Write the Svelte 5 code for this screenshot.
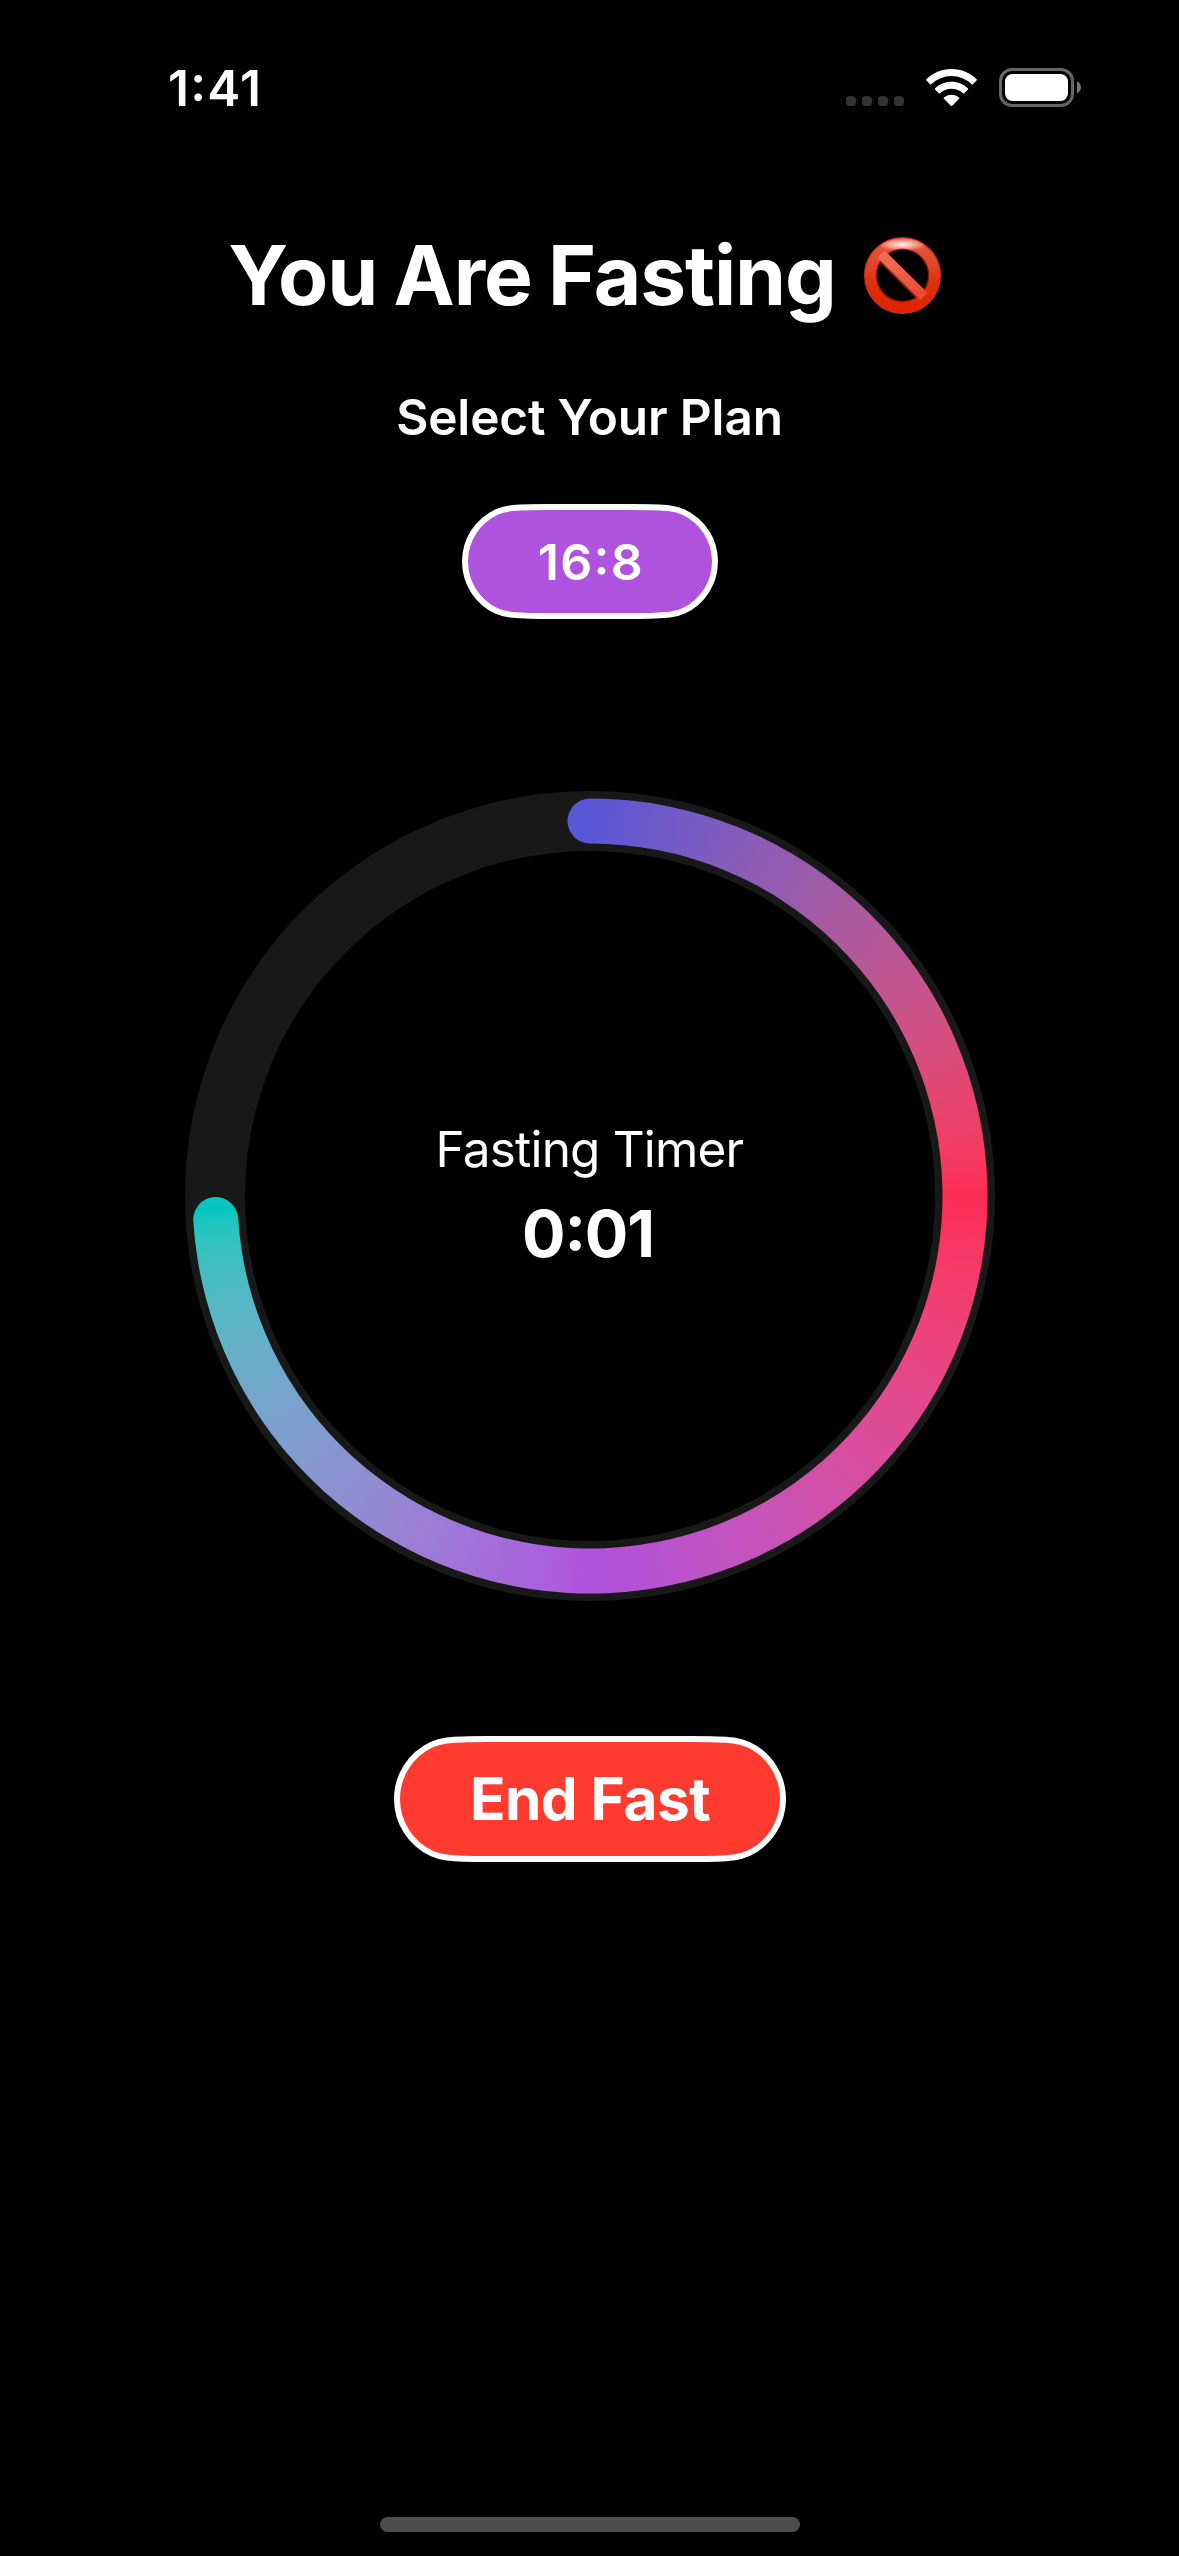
<script>
  const size = 810;
  const center = size / 2;
  const radius = 375;
  const track = 60;
  const bar = 45;
  const progress = 0.74;

  // Outline of the progress band, with a round cap at either end.
  function band(fraction) {
    const a = fraction * 2 * Math.PI;
    const at = (r) => `${center + r * Math.sin(a)} ${center - r * Math.cos(a)}`;
    const outer = radius + bar / 2;
    const inner = radius - bar / 2;
    const cap = bar / 2;
    const large = fraction > 0.5 ? 1 : 0;
    return `M${center} ${center - outer} A${outer} ${outer} 0 ${large} 1 ${at(outer)} A${cap} ${cap} 0 0 1 ${at(inner)} A${inner} ${inner} 0 ${large} 0 ${center} ${center - inner} A${cap} ${cap} 0 0 1 ${center} ${center - outer}Z`;
  }

  // Capsule whose round ends ease gradually into the straight edges,
  // inset by half of its outline.
  function capsule(w, h) {
    const o = 3;
    const r = h / 2 - o;
    const p = (x, y, right, bottom) =>
      `${right ? w - o - x * r : o + x * r} ${bottom ? h - o - y * r : o + y * r}`;
    const ease = [[0.5774, 0.0937], [0.7, 0.0365], [0.8, 0], [1.5287, 0]];
    const half = (right, bottom, inward) => {
      const q = (inward ? ease.slice().reverse() : ease).map(([x, y]) => p(x, y, right, bottom));
      const curve = `C${q.slice(1).join(' ')}`;
      return inward
        ? `L${q[0]} ${curve} A${r} ${r} 0 0 1 ${p(0, 1, right, bottom)}`
        : `A${r} ${r} 0 0 1 ${q[0]} ${curve}`;
    };
    return `M${p(0, 1, false, false)} ${half(false, false, false)} ${half(true, false, true)} ${half(true, true, false)} ${half(false, true, true)}Z`;
  }
</script>

<main class="screen">
  <header class="status">
    <span class="time">1:41</span>
    <div class="indicators">
      <div class="signal"><i></i><i></i><i></i><i></i></div>
      <svg class="wifi" width="51" height="37" viewBox="0 0 51 37">
        <path d="M25.5 0C35.3 0 44.2 3.9 50.7 10.2Q51.2 10.7 50.7 11.3L47 15.2Q46.4 15.8 45.8 15.2A29.3 29.3 0 0 0 5.2 15.2Q4.6 15.8 4 15.2L.3 11.3Q-.2 10.7 .3 10.2C6.8 3.9 15.7 0 25.5 0Z" />
        <path d="M25.5 12.8C31.9 12.8 37.7 15.3 42 19.4Q42.5 19.9 42 20.5L38.2 24.3Q37.6 24.9 37 24.3A16.8 16.8 0 0 0 14 24.3Q13.4 24.9 12.8 24.3L9 20.5Q8.5 19.9 9 19.4C13.3 15.3 19.1 12.8 25.5 12.8Z" />
        <path d="M25.5 25.7C28.4 25.7 31.1 26.8 33.1 28.6Q33.6 29.1 33.1 29.7L26.2 36.7Q25.5 37.3 24.8 36.7L17.9 29.7Q17.4 29.1 17.9 28.6C19.9 26.8 22.6 25.7 25.5 25.7Z" />
      </svg>
      <svg class="battery" width="82" height="39" viewBox="0 0 82 39">
        <rect class="case" x="1.5" y="1.5" width="72" height="36" rx="11.5" />
        <rect class="charge" x="6" y="6" width="63" height="27" rx="7.5" />
        <path class="nub" d="M78 13.2C80.5 14.3 82 16.7 82 19.3S80.5 24.3 78 25.4Z" />
      </svg>
    </div>
  </header>

  <div class="title-row">
    <h1>You Are Fasting</h1>
    <svg class="prohibited" width="77" height="77" viewBox="0 0 77 77" role="img" aria-label="Prohibited">
      <defs>
        <linearGradient id="ringFill" x1="0" y1="0" x2="0" y2="1">
          <stop offset="0" stop-color="#e8543c" />
          <stop offset=".35" stop-color="#e04428" />
          <stop offset=".65" stop-color="#dc2e0c" />
          <stop offset="1" stop-color="#e02400" />
        </linearGradient>
        <linearGradient id="slashFill" x1="0" y1="0" x2="1" y2="1">
          <stop offset="0" stop-color="#f0705c" />
          <stop offset="1" stop-color="#e84a30" />
        </linearGradient>
        <radialGradient id="shine">
          <stop offset="0" stop-color="#fff" stop-opacity=".9" />
          <stop offset=".5" stop-color="#fff" stop-opacity=".5" />
          <stop offset="1" stop-color="#fff" stop-opacity="0" />
        </radialGradient>
        <clipPath id="ringClip">
          <path clip-rule="evenodd" d="M38.5 1a37.5 37.5 0 1 0 .01 0ZM38.5 11.5a26.5 26.5 0 1 1-.01 0Z" />
        </clipPath>
      </defs>
      <circle class="rim" cx="38.5" cy="38.5" r="32.2" />
      <circle class="lip" cx="38.5" cy="38.3" r="27" />
      <path class="slash-edge" d="M17.5 18.5L58.5 59" />
      <circle class="ring" cx="38.5" cy="38.5" r="32" />
      <path class="slash" d="M17 17L60 59.5" />
      <g clip-path="url(#ringClip)">
        <ellipse cx="38.5" cy="7.5" rx="25" ry="6.5" fill="url(#shine)" />
      </g>
    </svg>
  </div>

  <h2>Select Your Plan</h2>

  <button class="pill plan">
    <svg width="256" height="115" viewBox="0 0 256 115"><path d={capsule(256, 115)} /></svg>
    <span>16:8</span>
  </button>

  <section class="dial">
    <svg class="ring-art" width={size} height={size} viewBox="0 0 {size} {size}">
      <defs>
        <clipPath id="band"><path d={band(progress)} /></clipPath>
      </defs>
      <circle class="track" cx={center} cy={center} r={radius} stroke-width={track} />
      <foreignObject width={size} height={size} clip-path="url(#band)">
        <div class="sweep"></div>
      </foreignObject>
    </svg>
    <div class="readout">
      <span class="label">Fasting Timer</span>
      <span class="value">0:01</span>
    </div>
  </section>

  <button class="pill end">
    <svg width="392" height="126" viewBox="0 0 392 126"><path d={capsule(392, 126)} /></svg>
    <span>End Fast</span>
  </button>

  <div class="home"></div>
</main>

<style>
  :global(body) {
    background: #000;
  }
  .screen {
    box-sizing: border-box;
    width: 1179px;
    height: 2556px;
    padding-bottom: 24px;
    display: flex;
    flex-direction: column;
    align-items: center;
    background: #000;
    color: #fff;
    font-family: Inter, 'Liberation Sans', sans-serif;
    font-feature-settings: 'calt' 1;
    white-space: nowrap;
  }
  .status {
    box-sizing: border-box;
    width: 100%;
    height: 176px;
    padding: 0 98px 0 168px;
    display: flex;
    align-items: center;
    justify-content: space-between;
  }
  .time {
    font-size: 49.5px;
    font-weight: 600;
    line-height: 60px;
    letter-spacing: 1.3px;
  }
  .indicators {
    display: flex;
    align-items: center;
    padding-bottom: 1px;
  }
  .signal {
    display: flex;
    gap: 6px;
    margin-right: 22px;
    padding-top: 27px;
  }
  .signal i {
    width: 10px;
    height: 10px;
    border-radius: 4px;
    background: #333;
  }
  .wifi {
    fill: #fff;
    margin-right: 22px;
  }
  .case {
    fill: none;
    stroke: #666;
    stroke-width: 3;
  }
  .charge {
    fill: #fff;
  }
  .nub {
    fill: #777;
  }
  .title-row {
    display: flex;
    align-items: center;
    gap: 28px;
    height: 100px;
    margin-top: 50px;
    padding-right: 9px;
  }
  h1 {
    margin: 0 0 0 -1px;
    font-size: 82px;
    font-weight: 700;
    line-height: 100px;
    letter-spacing: -1.1px;
    word-spacing: -2px;
  }
  .prohibited {
    fill: none;
    margin-bottom: 1px;
  }
  .rim {
    stroke: #c83318;
    stroke-width: 12.6;
  }
  .ring {
    stroke: url(#ringFill);
    stroke-width: 10.5;
  }
  .lip {
    stroke: #861804;
    stroke-width: 3;
  }
  .slash-edge {
    stroke: #9c2510;
    stroke-width: 12;
  }
  .slash {
    stroke: url(#slashFill);
    stroke-width: 10;
  }
  h2 {
    margin: 61px 0 0;
    font-size: 49.5px;
    font-weight: 600;
    line-height: 60px;
    letter-spacing: -0.15px;
  }
  .pill {
    display: grid;
    place-items: center;
    padding: 0;
    border: 0;
    background: none;
    color: #fff;
    font-family: inherit;
    font-feature-settings: inherit;
  }
  .pill > * {
    grid-area: 1 / 1;
  }
  .pill path {
    stroke: #fff;
    stroke-width: 6;
  }
  .plan {
    margin-top: 57px;
    margin-left: 1px;
    font-size: 50px;
    font-weight: 600;
    line-height: 60px;
    letter-spacing: 1.3px;
  }
  .plan span {
    padding-left: 2px;
  }
  .plan path {
    fill: #af52de;
  }
  .dial {
    display: grid;
    place-items: center;
    width: 810px;
    height: 810px;
    margin-top: 172px;
  }
  .dial > * {
    grid-area: 1 / 1;
  }
  .track {
    fill: none;
    stroke: #181818;
  }
  .sweep {
    width: 100%;
    height: 100%;
    background: conic-gradient(in oklab, #5856d6, #ff2d55 25%, #af52de 50%, #00c7be 74.4%, #5856d6);
  }
  .readout {
    display: flex;
    flex-direction: column;
    align-items: center;
  }
  .label {
    font-size: 49.5px;
    line-height: 60px;
    letter-spacing: -0.82px;
  }
  .value {
    font-size: 64.6px;
    font-weight: 700;
    line-height: 78px;
    letter-spacing: -1.1px;
    margin-top: 16px;
    padding-right: 3px;
  }
  .end {
    margin-top: 135px;
    margin-left: 1px;
    font-size: 58.5px;
    font-weight: 700;
    line-height: 70px;
    letter-spacing: -0.5px;
  }
  .end path {
    fill: #ff3b30;
  }
  .home {
    width: 420px;
    height: 15px;
    margin-top: auto;
    margin-left: 1px;
    border-radius: 8px;
    background: #4d4d4d;
  }
</style>
